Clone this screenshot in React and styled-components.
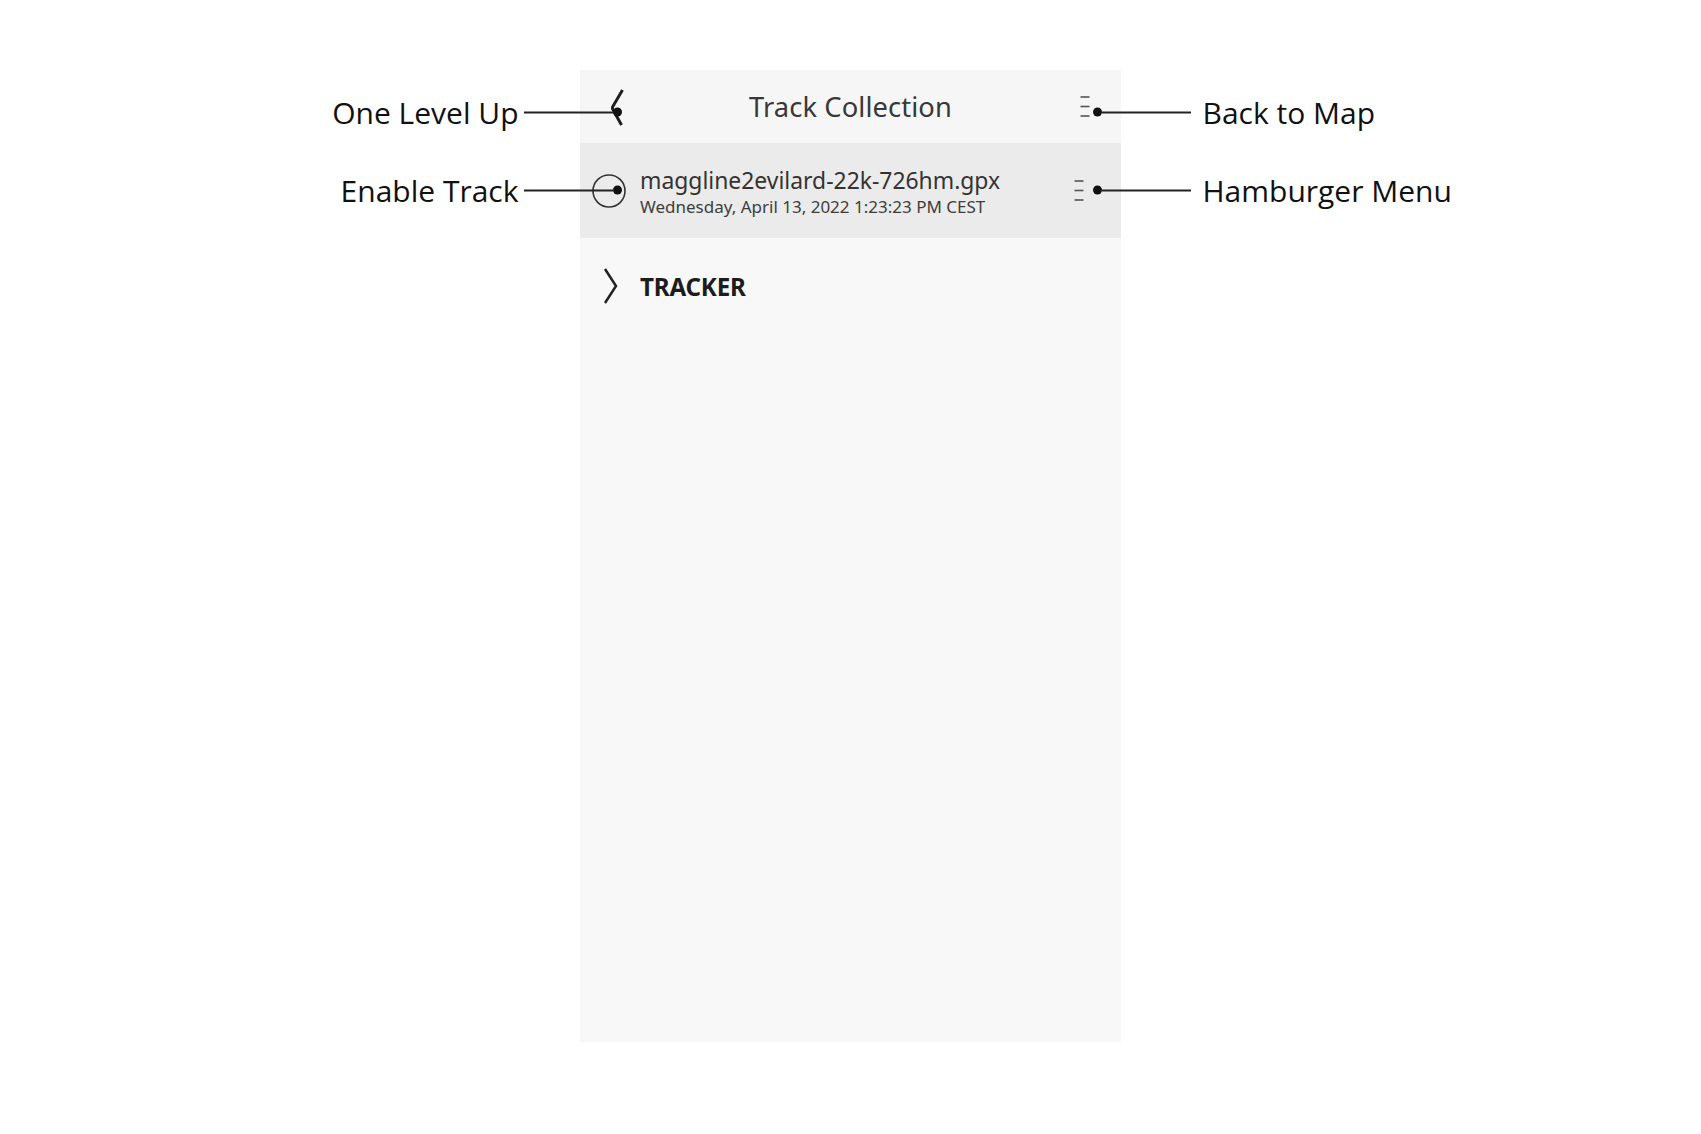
import React from "react";
import styled, { createGlobalStyle } from "styled-components";

const GlobalStyle = createGlobalStyle`
    body {
        margin: 0;
        background: #ffffff;
        font-family: "Noto Sans", "Open Sans", sans-serif;
    }
`;

const BackIcon = () => (
    <svg width="16" height="40" viewBox="0 0 16 40">
        <path d="M13.5 3 L3.5 20 Q3 21.5 4.5 23.5 L12.5 38" fill="none" stroke="#1e1e1e" strokeWidth="3" strokeLinejoin="miter" />
    </svg>
);

const ChevronRight = () => (
    <svg width="17" height="38" viewBox="0 0 17 38">
        <path d="M3 2 L14 19 L3 36" fill="none" stroke="#222" strokeWidth="2.5" />
    </svg>
);

const MenuIcon = ({ gap = 10 }) => (
    <svg width="10" height={gap * 2 + 2} viewBox={`0 0 10 ${gap * 2 + 2}`}>
        <g stroke="#555" strokeWidth="1.6">
            <line x1="0.5" y1="1" x2="9.5" y2="1" />
            <line x1="0.5" y1={gap + 1} x2="9.5" y2={gap + 1} />
            <line x1="0.5" y1={gap * 2 + 1} x2="9.5" y2={gap * 2 + 1} />
        </g>
    </svg>
);

const RadioIcon = () => (
    <svg width="36" height="36" viewBox="0 0 36 36">
        <circle cx="18" cy="18" r="16" fill="none" stroke="#333" strokeWidth="1.6" />
    </svg>
);

const App = () => {
    return (
        <>
            <GlobalStyle />
            <Page>
                <Panel>
                    <Header>
                        <HeaderSide>
                            <BackIcon />
                        </HeaderSide>
                        <Title>Track Collection</Title>
                        <HeaderSide $right>
                            <MenuIcon gap={9.5} />
                        </HeaderSide>
                    </Header>

                    <TrackRow>
                        <RadioSlot>
                            <RadioIcon />
                        </RadioSlot>
                        <TrackText>
                            <TrackName>maggline2evilard-22k-726hm.gpx</TrackName>
                            <TrackDate>Wednesday, April 13, 2022 1:23:23 PM CEST</TrackDate>
                        </TrackText>
                        <RowMenu>
                            <MenuIcon gap={9.5} />
                        </RowMenu>
                    </TrackRow>

                    <FolderRow>
                        <FolderChevron>
                            <ChevronRight />
                        </FolderChevron>
                        <FolderName>TRACKER</FolderName>
                    </FolderRow>

                    <Callout $side="left" $x={37} $y={42}>
                        <Label $side="left">One Level Up</Label>
                        <Line />
                        <Dot />
                    </Callout>
                    <Callout $side="left" $x={37} $y={120}>
                        <Label $side="left">Enable Track</Label>
                        <Line />
                        <Dot />
                    </Callout>
                    <Callout $side="right" $x={517} $y={42}>
                        <Dot />
                        <Line />
                        <Label $side="right">Back to Map</Label>
                    </Callout>
                    <Callout $side="right" $x={517} $y={120}>
                        <Dot />
                        <Line />
                        <Label $side="right">Hamburger Menu</Label>
                    </Callout>
                </Panel>
            </Page>
        </>
    );
};
export default App;

const Page = styled.div`
    width: 1701px;
    height: 1134px;
    box-sizing: border-box;
    padding-top: 70px;
    display: flex;
    justify-content: center;
    align-items: flex-start;
`;

const Panel = styled.div`
    position: relative;
    width: 541px;
    height: 972px;
    background: #f8f8f8;
`;

const Header = styled.div`
    height: 73px;
    display: grid;
    grid-template-columns: 80px 1fr 80px;
    align-items: center;
    background: #f6f6f6;
`;

const HeaderSide = styled.div`
    display: flex;
    align-items: center;
    justify-content: ${p => (p.$right ? "flex-end" : "flex-start")};
    padding: ${p => (p.$right ? "0 31px 0 0" : "0 0 0 29px")};
    height: 100%;
`;

const Title = styled.div`
    text-align: center;
    font-size: 27.3px;
    color: #383838;
    letter-spacing: 0.1px;
`;

const TrackRow = styled.div`
    height: 95px;
    display: flex;
    align-items: center;
    background: #ebebeb;
`;

const RadioSlot = styled.div`
    width: 36px;
    margin-left: 11px;
    display: flex;
`;

const TrackText = styled.div`
    flex: 1;
    margin-left: 13px;
    padding-top: 5px;
    display: flex;
    flex-direction: column;
`;

const TrackName = styled.div`
    font-size: 22.9px;
    line-height: 28px;
    color: #333;
`;

const TrackDate = styled.div`
    font-size: 17px;
    line-height: 24px;
    color: #3d3d3d;
`;

const RowMenu = styled.div`
    display: flex;
    padding-right: 37px;
`;

const FolderRow = styled.div`
    height: 96px;
    display: flex;
    align-items: center;
`;

const FolderChevron = styled.div`
    display: flex;
    margin-left: 22px;
    width: 17px;
`;

const FolderName = styled.div`
    margin-left: 21px;
    font-size: 24.2px;
    font-weight: 700;
    color: #1c1c1c;
    letter-spacing: -0.2px;
`;

const Callout = styled.div`
    position: absolute;
    top: ${p => p.$y}px;
    ${p => (p.$side === "left" ? `right: calc(100% - ${p.$x + 4.5}px);` : `left: ${p.$x - 4.5}px;`)}
    transform: translateY(-50%);
    display: flex;
    align-items: center;
    white-space: nowrap;
`;

const Label = styled.span`
    font-family: "Open Sans", "Noto Sans", sans-serif;
    font-size: 30px;
    color: #111;
    margin: ${p => (p.$side === "left" ? "0 5px 0 0" : "0 0 0 12px")};
`;

const Line = styled.span`
    display: block;
    width: 89px;
    height: 2px;
    background: #222;
`;

const Dot = styled.span`
    display: block;
    width: 9px;
    height: 9px;
    border-radius: 50%;
    background: #111;
`;
